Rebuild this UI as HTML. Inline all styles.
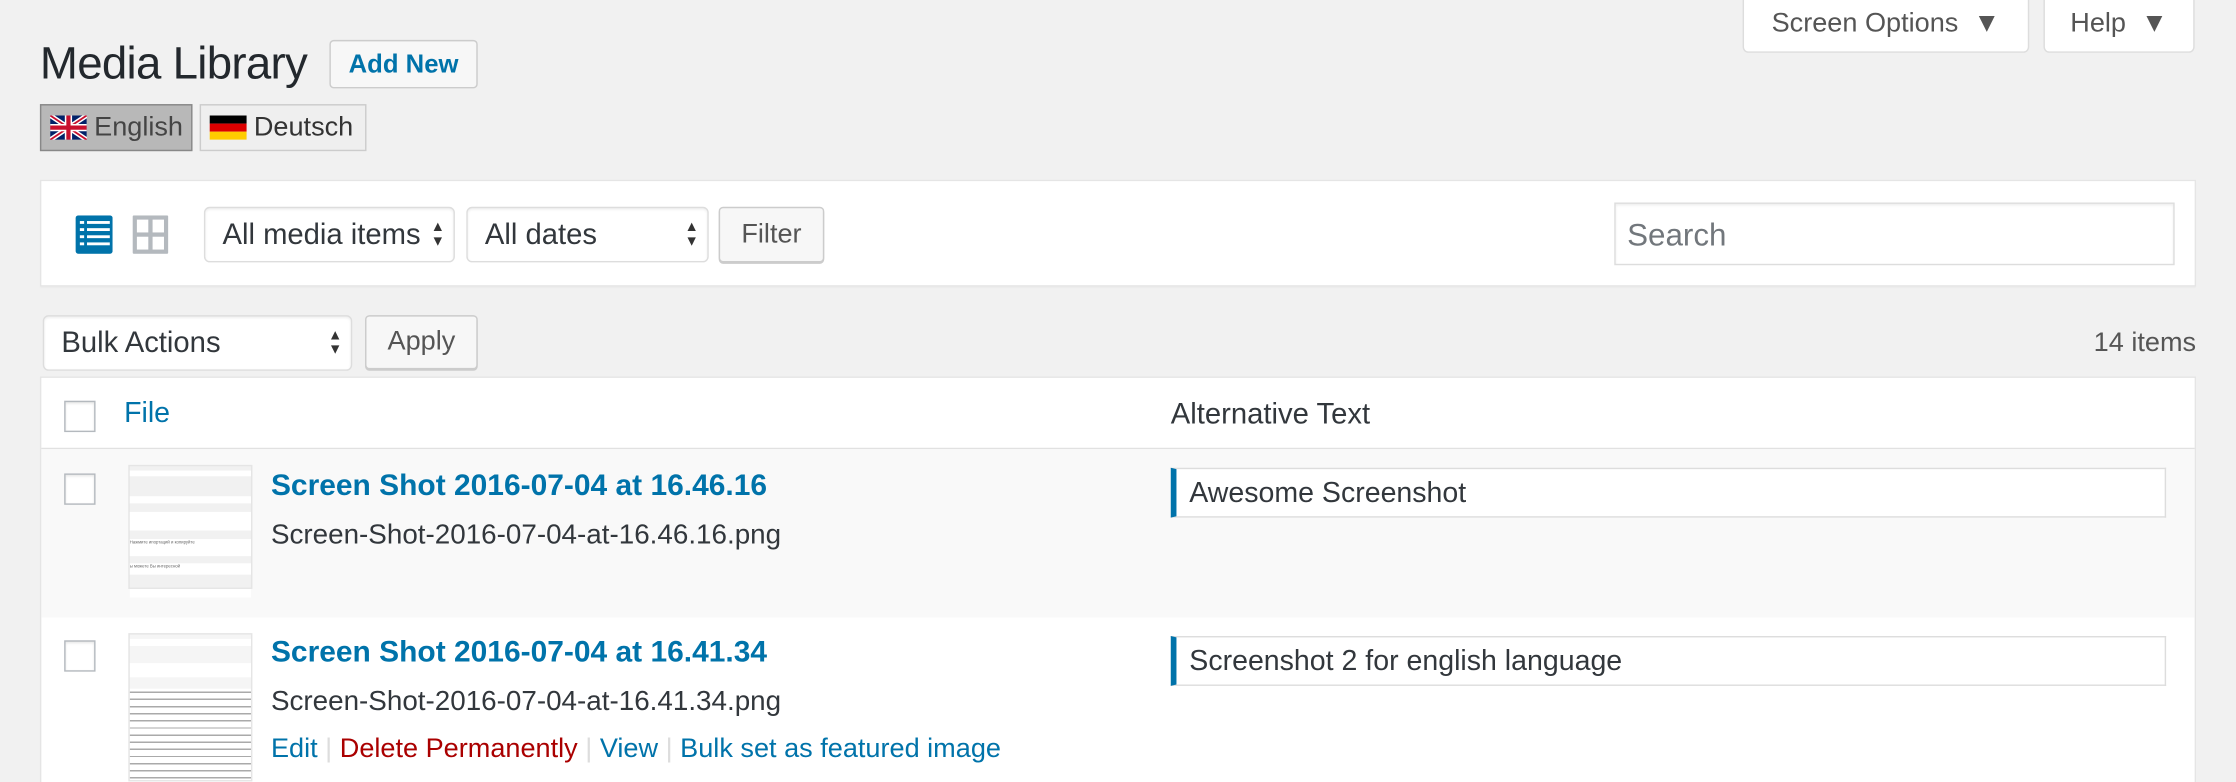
<!DOCTYPE html>
<html><head><meta charset="utf-8"><style>
*{box-sizing:border-box;margin:0;padding:0}
html,body{width:2236px;height:782px;overflow:hidden;background:#f1f1f1}
#w{width:1568px;height:548px;transform:scale(1.42602);transform-origin:0 0;position:relative;font-family:"Liberation Sans",sans-serif;color:#23282d}
.a{position:absolute}
.btn{position:absolute;background:#f7f7f7;border:1px solid #ccc;border-radius:3px;box-shadow:0 1px 0 #ccc;color:#555;font-size:19px;display:flex;align-items:center;justify-content:center}
.sel{position:absolute;background:#fff;border:1px solid #ddd;border-radius:4px;box-shadow:inset 0 1px 2px rgba(0,0,0,.07);font-size:20.5px;color:#32373c;display:flex;align-items:center;padding-left:12px}
.arr{position:absolute;right:6px;top:50%;transform:translateY(-50%);font-size:10px;line-height:10px;color:#333;text-align:center}
.cb{position:absolute;width:22px;height:22px;border:1px solid #b4b9be;background:#fff;box-shadow:inset 0 1px 2px rgba(0,0,0,.1)}
.blue{color:#0073aa}
</style></head><body><div id="w">
<div class="btn" style="left:1222px;top:-4px;width:201px;height:41px;background:#fff;border-radius:0 0 4px 4px;box-shadow:none;border-color:#ddd;font-size:19px">Screen Options&nbsp;&nbsp;▼</div>
<div class="btn" style="left:1433px;top:-4px;width:106px;height:41px;background:#fff;border-radius:0 0 4px 4px;box-shadow:none;border-color:#ddd;font-size:19px">Help&nbsp;&nbsp;▼</div>
<div class="a" style="left:28px;top:26px;font-size:32px;color:#23282d;letter-spacing:-0.5px">Media Library</div>
<div class="btn" style="left:231px;top:28px;width:104px;height:34px;box-shadow:none;background:#f7f7f7;color:#0073aa;font-weight:bold;font-size:18px">Add New</div>
<div class="a" style="left:28px;top:73px;width:107px;height:33px;background:#b8b8b8;border:1px solid #888;display:flex;align-items:center;padding-left:6px;font-size:19px;color:#444">
<svg width="26" height="17" viewBox="0 0 60 40" style="margin-right:5px"><rect width="60" height="40" fill="#012169"/><path d="M0 0L60 40M60 0L0 40" stroke="#fff" stroke-width="8"/><path d="M0 0L60 40M60 0L0 40" stroke="#c8102e" stroke-width="3"/><path d="M30 0V40M0 20H60" stroke="#fff" stroke-width="12"/><path d="M30 0V40M0 20H60" stroke="#c8102e" stroke-width="7"/></svg>English</div>
<div class="a" style="left:140px;top:73px;width:117px;height:33px;background:#efefef;border:1px solid #ccc;display:flex;align-items:center;padding-left:6px;font-size:19px;color:#333">
<svg width="26" height="17" viewBox="0 0 3 3" preserveAspectRatio="none" style="margin-right:5px"><rect width="3" height="1" fill="#000"/><rect y="1" width="3" height="1" fill="#d00"/><rect y="2" width="3" height="1" fill="#fc0"/></svg>Deutsch</div>
<div class="a" style="left:28px;top:126px;width:1512px;height:75px;background:#fff;border:1px solid #e5e5e5;box-shadow:0 1px 1px rgba(0,0,0,.04)"></div>
<svg class="a" style="left:53px;top:151px" width="26" height="27" viewBox="0 0 26 27"><rect width="26" height="27" rx="2" fill="#0073aa"/><g fill="#fff"><rect x="3" y="4" width="3" height="2"/><rect x="8" y="4" width="16" height="2"/><rect x="3" y="9" width="3" height="2"/><rect x="8" y="9" width="16" height="2"/><rect x="3" y="14" width="3" height="2"/><rect x="8" y="14" width="16" height="2"/><rect x="3" y="19" width="3" height="2"/><rect x="8" y="19" width="16" height="2"/></g></svg>
<svg class="a" style="left:93px;top:151px" width="25" height="27" viewBox="0 0 25 27"><rect width="25" height="27" rx="1" fill="#b4b9be"/><g fill="#fff"><rect x="3" y="3" width="8" height="9"/><rect x="14" y="3" width="8" height="9"/><rect x="3" y="15" width="8" height="9"/><rect x="14" y="15" width="8" height="9"/></g></svg>
<div class="sel" style="left:143px;top:145px;width:176px;height:39px">All media items<div class="arr">▲<br>▼</div></div>
<div class="sel" style="left:327px;top:145px;width:170px;height:39px">All dates<div class="arr">▲<br>▼</div></div>
<div class="btn" style="left:504px;top:145px;width:74px;height:39px">Filter</div>
<div class="a" style="left:1132px;top:142px;width:393px;height:44px;background:#fff;border:1px solid #ddd;box-shadow:inset 0 1px 2px rgba(0,0,0,.07);font-size:22px;color:#72777c;padding:9px 8px">Search</div>
<div class="sel" style="left:30px;top:221px;width:217px;height:39px">Bulk Actions<div class="arr">▲<br>▼</div></div>
<div class="btn" style="left:256px;top:221px;width:79px;height:38px">Apply</div>
<div class="a" style="right:28px;top:230px;font-size:19px;color:#555">14 items</div>
<div class="a" style="left:28px;top:264px;width:1512px;height:290px;background:#fff;border:1px solid #e5e5e5"></div>
<div class="a" style="left:29px;top:314px;width:1510px;height:1px;background:#e1e1e1"></div>
<div class="cb" style="left:45px;top:281px"></div>
<div class="a blue" style="left:87px;top:279px;font-size:20px">File</div>
<div class="a" style="left:821px;top:279px;font-size:20.5px;color:#32373c">Alternative Text</div>
<div class="a" style="left:29px;top:315px;width:1510px;height:118px;background:#f9f9f9"></div>
<div class="cb" style="left:45px;top:332px"></div>
<div class="a" style="left:90px;top:326px;width:87px;height:87px;background:#f1f1f1;border:1px solid #e5e5e5">
<div style="height:4px;background:#fff;margin-top:3px"></div><div style="height:5px;background:#fff;margin-top:14px"></div><div style="height:13px;background:#fff;margin-top:6px"></div><div style="height:12px;background:#fff;margin-top:6px;font-size:3px;color:#666;overflow:hidden">Нажмите ипортаций и копируйте</div><div style="height:8px;background:#fff;margin-top:5px;font-size:3px;color:#666;overflow:hidden">ы можете Вы интересной</div><div style="height:6px;background:#fff;margin-top:10px"></div></div>
<div class="a blue" style="left:190px;top:329px;font-size:21px;font-weight:bold">Screen Shot 2016-07-04 at 16.46.16</div>
<div class="a" style="left:190px;top:364px;font-size:19.5px;color:#32373c">Screen-Shot-2016-07-04-at-16.46.16.png</div>
<div class="a" style="left:821px;top:328px;width:698px;height:35px;background:#fff;border:1px solid #ddd;border-left:4px solid #0073aa;font-size:20px;padding:6px 9px;color:#32373c">Awesome Screenshot</div>
<div class="cb" style="left:45px;top:449px"></div>
<div class="a" style="left:90px;top:444px;width:87px;height:104px;background:#f5f5f5;border:1px solid #e5e5e5;overflow:hidden">
<div style="height:5px;background:#fff;margin-top:3px"></div><div style="height:10px;background:#fff;margin-top:12px"></div><div style="margin-top:8px;height:80px;background:repeating-linear-gradient(#fff 0,#fff 2px,#aaa 2px,#aaa 3px,#fff 3px,#fff 5px)"></div></div>
<div class="a blue" style="left:190px;top:446px;font-size:21px;font-weight:bold">Screen Shot 2016-07-04 at 16.41.34</div>
<div class="a" style="left:190px;top:481px;font-size:19.5px;color:#32373c">Screen-Shot-2016-07-04-at-16.41.34.png</div>
<div class="a" style="left:190px;top:515px;font-size:19px;color:#ddd;white-space:pre"><span class="blue">Edit</span> | <span style="color:#a00">Delete Permanently</span> | <span class="blue">View</span> | <span class="blue">Bulk set as featured image</span></div>
<div class="a" style="left:821px;top:446px;width:698px;height:35px;background:#fff;border:1px solid #ddd;border-left:4px solid #0073aa;font-size:20px;padding:6px 9px;color:#32373c">Screenshot 2 for english language</div>
</div></body></html>
